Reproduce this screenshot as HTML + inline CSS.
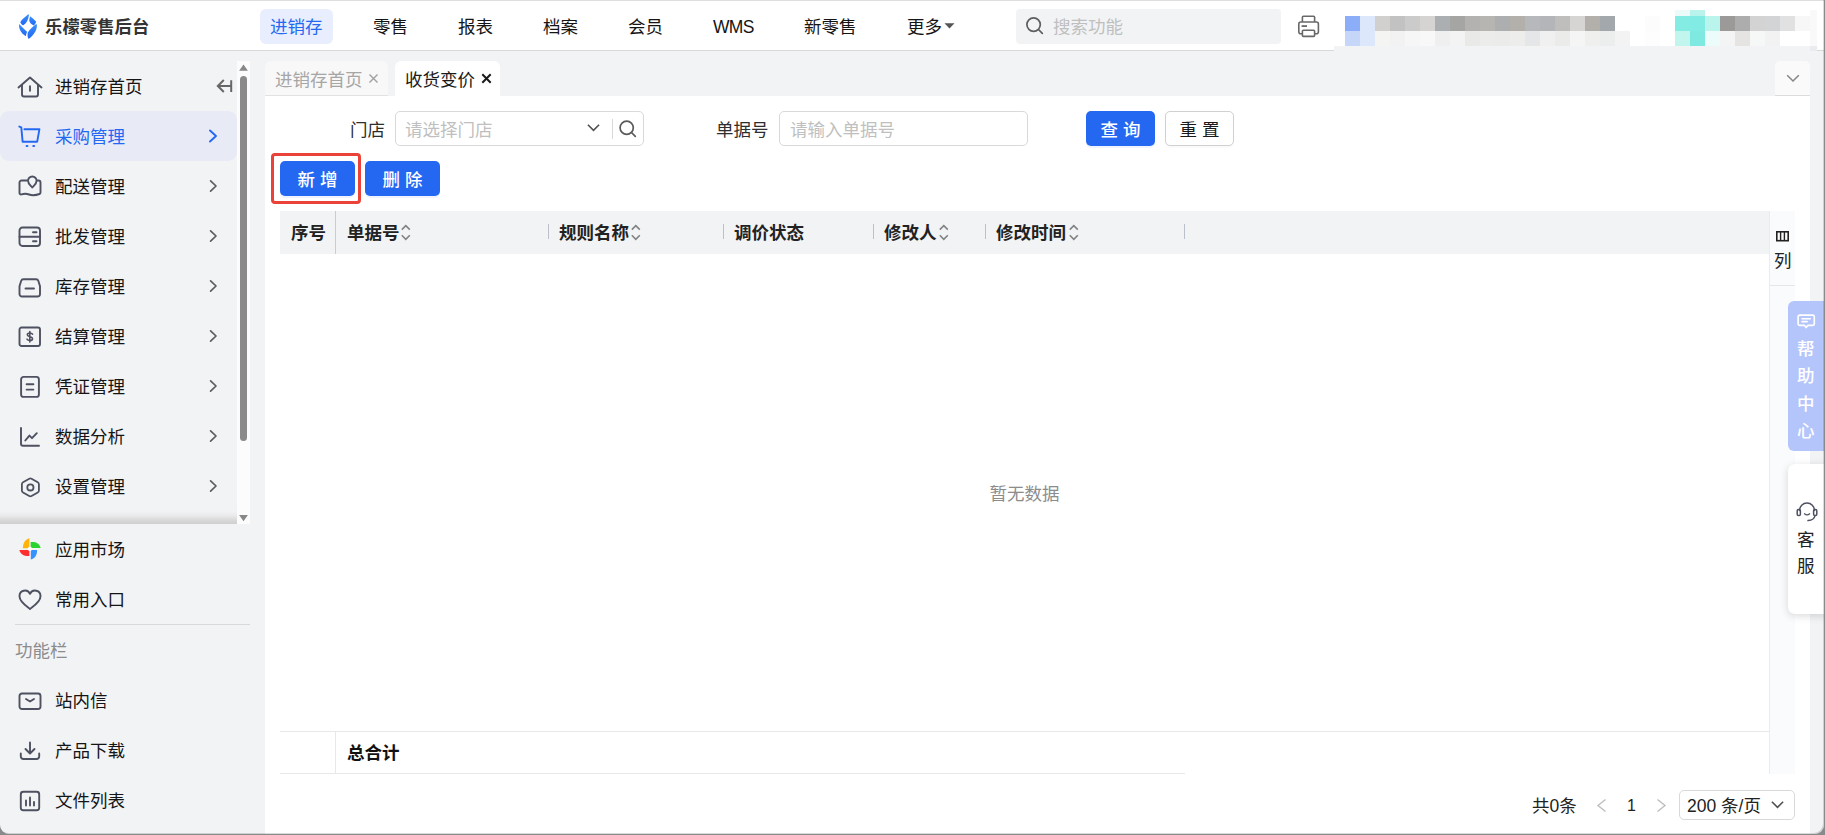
<!DOCTYPE html>
<html lang="zh-CN">
<head>
<meta charset="utf-8">
<title>乐檬零售后台</title>
<style>
*{box-sizing:border-box;margin:0;padding:0}
html,body{width:1825px;height:835px;overflow:hidden}
#win{position:absolute;left:0;top:0;width:1824px;height:834px;background:#f2f3f5;border-radius:0 0 9px 9px;overflow:hidden}
body{position:relative;background:#8a8a8a;font-family:"Liberation Sans","Noto Sans CJK SC",sans-serif;font-size:17.5px;color:#151515;}
.abs{position:absolute}
.t{position:absolute;white-space:nowrap;line-height:24px;height:24px;margin-top:1px}
svg{position:absolute;overflow:visible}
/* header */
#hdr{left:0;top:0;width:1825px;height:51px;background:#fff;border-top:1px solid #dedede;border-bottom:1px solid #d8d8d8}
.nav{top:14px}
/* sidebar */
.mi{left:55px}
.chev{left:208px;width:10px;height:14px}
.ico{fill:none;stroke:#4d5160;stroke-width:1.9;stroke-linecap:round;stroke-linejoin:round}
/* table */
.th{font-weight:bold;color:#222}
.sep{position:absolute;top:224px;width:1px;height:15px;background:#bcc0cb}
.btn{position:absolute;height:35px;line-height:39px;font-weight:500;border-radius:5px;text-align:center;font-size:17.5px}
.blue{background:#2468f2;color:#fff}
#mosaic i{position:absolute;display:block}
</style>
</head>
<body>
<div id="win">
<!-- ===== HEADER ===== -->
<div id="hdr" class="abs"></div>
<svg style="left:10px;top:5px" width="40" height="40" viewBox="0 0 40 40">
  <defs><linearGradient id="lg" x1="0" y1="0" x2="0" y2="1"><stop offset="0" stop-color="#3d8ff9"/><stop offset="1" stop-color="#1e68f4"/></linearGradient></defs>
  <path fill="url(#lg)" d="M18.300 9.200C14.500 12.500 11.500 14.500 10.300 17.200C11 18.800 12 19.800 13.200 20.300C16 18.500 18.500 15 18.900 10.200C18.900 9.500 18.700 9.200 18.300 9.200Z"/>
  <path fill="url(#lg)" d="M20.200 11.200C22 13 24.500 14.500 26.200 16.800C25.700 18.300 24.900 19.500 23.800 20.500C21.500 19.500 19.600 17.800 19.200 15.600C19.300 14 19.700 12.500 20.200 11.200Z"/>
  <path fill="url(#lg)" d="M9.300 19.100C8.300 22.500 10.500 28 15.700 31.300C16 29.800 16.500 28.200 17.100 26.800C14.500 24.500 11.500 22 9.300 19.100Z"/>
  <path fill="url(#lg)" d="M26.600 18.800C27.800 23 25 29.500 18.600 34C17.500 32.500 17.300 30 17.800 27.600C19.500 24.500 23 21.500 26.600 18.800Z"/>
</svg>
<div class="t" style="left:45px;top:14px;font-weight:bold;font-size:17.3px;color:#333;letter-spacing:0.100px">乐檬零售后台</div>

<div class="abs" style="left:260px;top:9px;width:73px;height:35px;border-radius:6px;background:#e8eefe"></div>
<div class="t nav" style="left:270px;color:#2468f2">进销存</div>
<div class="t nav" style="left:373px">零售</div>
<div class="t nav" style="left:458px">报表</div>
<div class="t nav" style="left:543px">档案</div>
<div class="t nav" style="left:628px">会员</div>
<div class="t nav" style="left:713px;letter-spacing:-0.700px">WMS</div>
<div class="t nav" style="left:804px">新零售</div>
<div class="t nav" style="left:907px">更多</div>
<svg style="left:944px;top:23px" width="11" height="6" viewBox="0 0 11 6"><path d="M0.5 0.3H10.5L5.500 5.600Z" fill="#555"/></svg>

<div class="abs" style="left:1016px;top:9px;width:265px;height:35px;border-radius:4px;background:#f2f3f5"></div>
<svg style="left:1025px;top:16px" width="19" height="19" viewBox="0 0 19 19"><circle cx="8.6" cy="8.6" r="6.700" fill="none" stroke="#5e5e5e" stroke-width="1.7"/><path d="M13.500 13.500L17.300 17.300" stroke="#5e5e5e" stroke-width="1.7" stroke-linecap="round"/></svg>
<div class="t" style="left:1053px;top:14px;color:#bfbfbf">搜索功能</div>

<!-- printer -->
<svg style="left:1297px;top:14px" width="24" height="24" viewBox="0 0 24 24" fill="none" stroke="#686868" stroke-width="1.600" stroke-linejoin="round" stroke-linecap="butt">
  <path d="M5.400 8V3.300a1 1 0 0 1 1-1h10.200a1 1 0 0 1 1 1V8"/>
  <rect x="1.800" y="8" width="19.600" height="11.700" rx="2"/>
  <rect x="5.400" y="16.200" width="12.200" height="6.200" rx="1" fill="#fff"/>
  <path d="M4.600 12.100h5.400" stroke-width="1.800"/>
</svg>

<!-- mosaic -->
<div id="mosaic"><i style="left:1345px;top:16px;width:15px;height:15px;background:#8caef8"></i><i style="left:1360px;top:16px;width:15px;height:15px;background:#dde7fb"></i><i style="left:1375px;top:16px;width:15px;height:15px;background:#d1d0ce"></i><i style="left:1390px;top:16px;width:15px;height:15px;background:#c2c2c2"></i><i style="left:1405px;top:16px;width:15px;height:15px;background:#cbcbcb"></i><i style="left:1420px;top:16px;width:15px;height:15px;background:#d5d4d2"></i><i style="left:1435px;top:16px;width:15px;height:15px;background:#abafb2"></i><i style="left:1450px;top:16px;width:15px;height:15px;background:#a5a5a3"></i><i style="left:1465px;top:16px;width:15px;height:15px;background:#b3b2b0"></i><i style="left:1480px;top:16px;width:15px;height:15px;background:#b7b5b2"></i><i style="left:1495px;top:16px;width:15px;height:15px;background:#adaeb0"></i><i style="left:1510px;top:16px;width:15px;height:15px;background:#b3afaa"></i><i style="left:1525px;top:16px;width:15px;height:15px;background:#b6b8bb"></i><i style="left:1540px;top:16px;width:15px;height:15px;background:#b3b5b8"></i><i style="left:1555px;top:16px;width:15px;height:15px;background:#bfbebd"></i><i style="left:1570px;top:16px;width:15px;height:15px;background:#d6d5d3"></i><i style="left:1585px;top:16px;width:15px;height:15px;background:#b3b0ac"></i><i style="left:1600px;top:16px;width:15px;height:15px;background:#a3a8ad"></i><i style="left:1345px;top:31px;width:15px;height:15px;background:#c5d6f8"></i><i style="left:1360px;top:31px;width:15px;height:15px;background:#dde7fb"></i><i style="left:1375px;top:31px;width:15px;height:15px;background:#f4f4f2"></i><i style="left:1390px;top:31px;width:15px;height:15px;background:#f1f2f1"></i><i style="left:1405px;top:31px;width:15px;height:15px;background:#f6f6f6"></i><i style="left:1420px;top:31px;width:15px;height:15px;background:#f8f8f8"></i><i style="left:1435px;top:31px;width:15px;height:15px;background:#efefef"></i><i style="left:1450px;top:31px;width:15px;height:15px;background:#f3f3f3"></i><i style="left:1465px;top:31px;width:15px;height:15px;background:#e9e9e8"></i><i style="left:1480px;top:31px;width:15px;height:15px;background:#ececeb"></i><i style="left:1495px;top:31px;width:15px;height:15px;background:#ebebea"></i><i style="left:1510px;top:31px;width:15px;height:15px;background:#ededec"></i><i style="left:1525px;top:31px;width:15px;height:15px;background:#e4e6e8"></i><i style="left:1540px;top:31px;width:15px;height:15px;background:#eff0ef"></i><i style="left:1555px;top:31px;width:15px;height:15px;background:#ebebe9"></i><i style="left:1570px;top:31px;width:15px;height:15px;background:#f5f5f5"></i><i style="left:1585px;top:31px;width:15px;height:15px;background:#efefee"></i><i style="left:1600px;top:31px;width:15px;height:15px;background:#eceeed"></i><i style="left:1615px;top:31px;width:15px;height:15px;background:#f3f3f3"></i><i style="left:1675px;top:10px;width:15px;height:6px;background:#ecfbfa"></i><i style="left:1690px;top:10px;width:15px;height:6px;background:#b9f3ec"></i><i style="left:1645px;top:16px;width:15px;height:15px;background:#fcfcfc"></i><i style="left:1675px;top:16px;width:15px;height:15px;background:#85ece4"></i><i style="left:1690px;top:16px;width:15px;height:15px;background:#82ebe3"></i><i style="left:1705px;top:16px;width:15px;height:15px;background:#b9f4ed"></i><i style="left:1720px;top:16px;width:15px;height:15px;background:#9c9a98"></i><i style="left:1735px;top:16px;width:15px;height:15px;background:#adadad"></i><i style="left:1750px;top:16px;width:15px;height:15px;background:#d3d3d3"></i><i style="left:1765px;top:16px;width:15px;height:15px;background:#d3d4d6"></i><i style="left:1780px;top:16px;width:15px;height:15px;background:#e1e1e1"></i><i style="left:1795px;top:16px;width:15px;height:15px;background:#f7f7f7"></i><i style="left:1645px;top:31px;width:15px;height:15px;background:#fdfdfd"></i><i style="left:1675px;top:31px;width:15px;height:15px;background:#c3f5ef"></i><i style="left:1690px;top:31px;width:15px;height:15px;background:#7de9e1"></i><i style="left:1705px;top:31px;width:15px;height:15px;background:#ecfcfb"></i><i style="left:1720px;top:31px;width:15px;height:15px;background:#f4f4f4"></i><i style="left:1735px;top:31px;width:15px;height:15px;background:#e5e4e2"></i><i style="left:1750px;top:31px;width:15px;height:15px;background:#f6f7f7"></i><i style="left:1765px;top:31px;width:15px;height:15px;background:#f2f2f2"></i><i style="left:1810px;top:10px;width:7px;height:36px;background:#f9f9f9"></i><i style="left:1334px;top:46px;width:483px;height:5px;background:#f2f3f5"></i><i style="left:1810px;top:46px;width:7px;height:5px;background:#e9ebef"></i></div>

<!-- ===== SIDEBAR ===== -->
<div class="abs" style="left:0;top:111px;width:237px;height:50px;border-radius:9px;background:#e8ebf6"></div>
<!-- scrollbar -->
<div class="abs" style="left:237px;top:61px;width:13px;height:463px;background:#fcfcfc"></div>
<svg style="left:239px;top:64px" width="9" height="7" viewBox="0 0 9 7"><path d="M4.500 0.500L8.900 6.800H0.100Z" fill="#888"/></svg>
<svg style="left:239px;top:515px" width="9" height="7" viewBox="0 0 9 7"><path d="M4.500 6.300L8.900 0.100H0.100Z" fill="#888"/></svg>
<div class="abs" style="left:240px;top:76px;width:7px;height:365px;border-radius:4px;background:#8a8a8a"></div>
<!-- bottom shadow of scroll area -->
<div class="abs" style="left:0;top:511px;width:237px;height:13px;background:linear-gradient(#f2f3f5,#eaeaeb 35%,#d9d9da 70%,#cecece)"></div>

<div class="t mi" style="top:74px">进销存首页</div>
<div class="t mi" style="top:124px;color:#2468f2">采购管理</div>
<div class="t mi" style="top:174px">配送管理</div>
<div class="t mi" style="top:224px">批发管理</div>
<div class="t mi" style="top:274px">库存管理</div>
<div class="t mi" style="top:324px">结算管理</div>
<div class="t mi" style="top:374px">凭证管理</div>
<div class="t mi" style="top:424px">数据分析</div>
<div class="t mi" style="top:474px">设置管理</div>
<div class="t mi" style="top:537px">应用市场</div>
<div class="t mi" style="top:587px">常用入口</div>
<div class="abs" style="left:15px;top:624px;width:235px;height:1px;background:#d9d9d9"></div>
<div class="t" style="left:15px;top:638px;color:#8c8c8c">功能栏</div>
<div class="t mi" style="top:688px">站内信</div>
<div class="t mi" style="top:738px">产品下载</div>
<div class="t mi" style="top:788px">文件列表</div>

<!-- collapse icon -->
<svg style="left:216px;top:78px" width="17" height="16" viewBox="0 0 17 16" fill="none" stroke="#676767" stroke-width="2" stroke-linecap="butt" stroke-linejoin="miter"><path d="M1.800 8H15M7.800 2L1.800 8L7.800 14M15.200 2.200V14"/></svg>

<!-- chevrons -->
<svg class="chev" style="top:129px" viewBox="0 0 10 14"><path d="M2 1.500L8 7L2 12.500" fill="none" stroke="#2468f2" stroke-width="1.900" stroke-linecap="round" stroke-linejoin="round"/></svg>
<svg class="chev" style="top:179px" viewBox="0 0 10 14"><path d="M2.600 1.800L8 7L2.600 12.200" fill="none" stroke="#5c5c5c" stroke-width="1.700" stroke-linecap="round" stroke-linejoin="round"/></svg>
<svg class="chev" style="top:229px" viewBox="0 0 10 14"><path d="M2.600 1.800L8 7L2.600 12.200" fill="none" stroke="#5c5c5c" stroke-width="1.700" stroke-linecap="round" stroke-linejoin="round"/></svg>
<svg class="chev" style="top:279px" viewBox="0 0 10 14"><path d="M2.600 1.800L8 7L2.600 12.200" fill="none" stroke="#5c5c5c" stroke-width="1.700" stroke-linecap="round" stroke-linejoin="round"/></svg>
<svg class="chev" style="top:329px" viewBox="0 0 10 14"><path d="M2.600 1.800L8 7L2.600 12.200" fill="none" stroke="#5c5c5c" stroke-width="1.700" stroke-linecap="round" stroke-linejoin="round"/></svg>
<svg class="chev" style="top:379px" viewBox="0 0 10 14"><path d="M2.600 1.800L8 7L2.600 12.200" fill="none" stroke="#5c5c5c" stroke-width="1.700" stroke-linecap="round" stroke-linejoin="round"/></svg>
<svg class="chev" style="top:429px" viewBox="0 0 10 14"><path d="M2.600 1.800L8 7L2.600 12.200" fill="none" stroke="#5c5c5c" stroke-width="1.700" stroke-linecap="round" stroke-linejoin="round"/></svg>
<svg class="chev" style="top:479px" viewBox="0 0 10 14"><path d="M2.600 1.800L8 7L2.600 12.200" fill="none" stroke="#5c5c5c" stroke-width="1.700" stroke-linecap="round" stroke-linejoin="round"/></svg>

<!-- ICONS -->
<!-- home -->
<svg class="ico" style="left:17px;top:76px" width="26" height="22" viewBox="0 0 26 22"><path d="M1.500 11.500L13 1.500L24.500 11.500"/><path d="M5 9V18.500a2 2 0 0 0 2 2H19a2 2 0 0 0 2-2V9"/><path d="M13 10.300V14.800"/></svg>
<!-- cart -->
<svg class="ico" style="left:18px;top:125px;stroke:#2468f2" width="23" height="23" viewBox="0 0 23 23"><path d="M1.300 1.600L3.300 2.300L4.600 16.700H19.200L21.400 4.300H6.400"/><path d="M8.600 21h.8M15.300 21h.8" stroke-width="2"/></svg>
<!-- map -->
<svg class="ico" style="left:18px;top:175px" width="24" height="22" viewBox="0 0 24 22"><path d="M9 5.500H3.500a2 2 0 0 0-2 2V18a1.500 1.500 0 0 0 2 1.400C6 18.600 8.500 18.600 11 19.500S17 20.600 21.500 19a1.500 1.500 0 0 0 1-1.400V7.500a2 2 0 0 0-2-2H19.500"/><path d="M14.300 1.500a4.300 4.300 0 0 1 4.300 4.300C18.600 8.800 16 10.500 14.300 12.500C12.600 10.500 10 8.800 10 5.800A4.300 4.300 0 0 1 14.300 1.500Z"/></svg>
<!-- wholesale -->
<svg class="ico" style="left:18px;top:226px" width="24" height="22" viewBox="0 0 24 22"><rect x="1.500" y="1.500" width="20.500" height="18.500" rx="3"/><path d="M1.500 10.800H22M15 6.300h3.500M15 15.300h3.500"/></svg>
<!-- stock -->
<svg class="ico" style="left:18px;top:277px" width="24" height="21" viewBox="0 0 24 21"><path d="M5.500 2.200H18a2.500 2.500 0 0 1 2.400 1.800L22 9.300V17a2.500 2.500 0 0 1-2.500 2.500H4A2.500 2.500 0 0 1 1.500 17V9.300L3.100 4A2.500 2.500 0 0 1 5.500 2.200Z"/><path d="M7.500 11.500h8.500"/></svg>
<!-- settle -->
<svg class="ico" style="left:18px;top:326px" width="24" height="22" viewBox="0 0 24 22"><rect x="1.500" y="1.500" width="20.500" height="18.500" rx="2"/><path d="M14.500 8.200C14 7.300 13 7 11.800 7C10.300 7 9.300 7.700 9.300 8.800C9.300 11.300 14.500 10 14.500 12.700C14.500 13.800 13.400 14.500 11.800 14.500C10.500 14.500 9.500 14 9 13.200M11.800 5.500V16" stroke-width="1.600"/></svg>
<!-- voucher -->
<svg class="ico" style="left:19px;top:375px" width="22" height="24" viewBox="0 0 22 24"><rect x="2.100" y="1.900" width="17.800" height="20" rx="2.500"/><path d="M7.600 9.200h6.800M7.600 14.600h6.800"/></svg>
<!-- data -->
<svg class="ico" style="left:19px;top:426px" width="22" height="22" viewBox="0 0 22 22"><path d="M2 2V17.800a2 2 0 0 0 2 2H20"/><path d="M6.300 14.500L10.400 9.600L13 12.200L17.800 7.200"/></svg>
<!-- settings -->
<svg class="ico" style="left:19.600px;top:476.500px" width="20.800" height="20.800" viewBox="0 0 22 22" stroke-width="2"><path d="M9.800 1.800a2.400 2.400 0 0 1 2.400 0L18.800 5.600a2.400 2.400 0 0 1 1.200 2.100V14.300a2.400 2.400 0 0 1-1.200 2.100L12.200 20.200a2.400 2.400 0 0 1-2.400 0L3.200 16.400a2.400 2.400 0 0 1-1.200-2.100V7.700A2.400 2.400 0 0 1 3.200 5.600Z"/><circle cx="11" cy="11" r="3.300"/></svg>
<!-- pinwheel -->
<svg style="left:19px;top:538px" width="22" height="22" viewBox="0 0 22 22">
  <path d="M10.400 0.200V10.200H3.900C3.900 5 6 1.500 10.400 0.200Z" fill="#ffb30b"/>
  <path d="M11.600 4H15C18.500 4.300 20.800 7 21.700 10H11.600Z" fill="#28d42e"/>
  <path d="M11.800 21.600V11.900H18.100C18.100 17 16 20.300 11.800 21.600Z" fill="#3592ff"/>
  <path d="M0.300 11.900H10.400V17.900H7C3.500 17.600 1.200 15 0.300 11.900Z" fill="#ff2f2f"/>
  <circle cx="10.900" cy="10.900" r="2.100" fill="#fff"/>
</svg>
<!-- heart -->
<svg class="ico" style="left:18px;top:589px" width="24" height="22" viewBox="0 0 24 22"><path d="M12 20C9 17.500 1.500 13 1.500 7.300A5.500 5.500 0 0 1 12 4.800A5.500 5.500 0 0 1 22.500 7.300C22.500 13 15 17.500 12 20Z"/></svg>
<!-- mail -->
<svg class="ico" style="left:18px;top:692px" width="24" height="19" viewBox="0 0 24 19"><rect x="1.500" y="1.500" width="21" height="15.500" rx="2.500"/><path d="M8 7L12 9.500L16 7"/></svg>
<!-- download -->
<svg class="ico" style="left:19px;top:741px" width="22" height="20" viewBox="0 0 22 20"><path d="M11 1.500V12M6.500 8L11 12.500L15.500 8"/><path d="M1.800 12.500V15.500a2.500 2.500 0 0 0 2.500 2.500H17.700a2.500 2.500 0 0 0 2.500-2.500V12.500"/></svg>
<!-- file list -->
<svg class="ico" style="left:19px;top:790px" width="22" height="22" viewBox="0 0 22 22"><rect x="1.800" y="1.800" width="18.400" height="18.400" rx="2.500"/><path d="M7 10.500V15.500M11 7.500V15.500M15 12V15.500"/></svg>

<!-- ===== MAIN ===== -->
<!-- tabs -->
<div class="abs" style="left:265px;top:61px;width:123px;height:35px;background:#f8f8f8;border-radius:6px 6px 0 0;border-bottom:1px solid #e2e2e2"></div>
<div class="abs" style="left:395px;top:61px;width:105px;height:36px;background:#fff;border-radius:6px 6px 0 0"></div>
<div class="t" style="left:275px;top:67px;color:#a6a6a6">进销存首页</div>
<svg style="left:368px;top:73px" width="11" height="11" viewBox="0 0 11 11"><path d="M1.500 1.500L9.500 9.500M9.500 1.500L1.500 9.500" stroke="#a0a0a0" stroke-width="1.400"/></svg>
<div class="t" style="left:405px;top:67px;color:#1a1a1a">收货变价</div>
<svg style="left:481px;top:73px" width="11" height="11" viewBox="0 0 11 11"><path d="M1.300 1.300L9.700 9.700M9.700 1.300L1.300 9.700" stroke="#1a1a1a" stroke-width="2"/></svg>
<!-- tab dropdown button -->
<div class="abs" style="left:1775px;top:61px;width:35px;height:35px;background:#fafafa;border-radius:5px 5px 0 0;border-bottom:1px solid #dcdcdc"></div>
<svg style="left:1786px;top:74px" width="14" height="9" viewBox="0 0 14 9"><path d="M1.200 1.200L7 7L12.800 1.200" fill="none" stroke="#868686" stroke-width="1.500"/></svg>

<!-- panel -->
<div class="abs" style="left:265px;top:96px;width:1545px;height:739px;background:#fff"></div>

<!-- filter row -->
<div class="t" style="left:350px;top:117px;color:#2e2e2e">门店</div>
<div class="abs" style="left:395px;top:111px;width:249px;height:35px;border:1px solid #d9d9d9;border-radius:5px;background:#fff"></div>
<div class="t" style="left:405px;top:117px;color:#bfbfbf">请选择门店</div>
<svg style="left:586px;top:123px" width="15" height="10" viewBox="0 0 15 10"><path d="M1.900 1.700L7.500 7.300L13.100 1.700" fill="none" stroke="#505050" stroke-width="1.600"/></svg>
<div class="abs" style="left:612px;top:119px;width:1px;height:20px;background:#d9d9d9"></div>
<svg style="left:618px;top:119px" width="20" height="20" viewBox="0 0 20 20"><circle cx="8.700" cy="8.700" r="6.600" fill="none" stroke="#5a5a5a" stroke-width="1.700"/><path d="M13.500 13.500L17.300 17.300" stroke="#5a5a5a" stroke-width="1.700" stroke-linecap="round"/></svg>

<div class="t" style="left:716px;top:117px;color:#2e2e2e">单据号</div>
<div class="abs" style="left:779px;top:111px;width:249px;height:35px;border:1px solid #d9d9d9;border-radius:5px;background:#fff"></div>
<div class="t" style="left:790px;top:117px;color:#bfbfbf">请输入单据号</div>

<div class="btn blue" style="left:1086px;top:111px;width:69px;box-shadow:0 2px 0 rgba(36,104,242,.08)">查 询</div>
<div class="btn" style="left:1165px;top:111px;width:69px;background:#fff;border:1px solid #d0d0d0;line-height:37px;font-weight:400;color:#1a1a1a;box-shadow:0 2px 0 rgba(0,0,0,.02)">重 置</div>

<!-- action buttons -->
<div class="abs" style="left:271px;top:153px;width:90px;height:51px;border:3px solid #ea4238;border-radius:4px"></div>
<div class="btn blue" style="left:280px;top:161px;width:75px;box-shadow:0 2px 0 rgba(36,104,242,.08)">新 增</div>
<div class="btn blue" style="left:365px;top:161px;width:75px;box-shadow:0 2px 0 rgba(36,104,242,.08)">删 除</div>

<!-- table header -->
<div class="abs" style="left:280px;top:211px;width:1489px;height:43px;background:#f2f3f5"></div>
<div class="abs" style="left:335px;top:211px;width:1px;height:43px;background:#cbccd3"></div>
<div class="t th" style="left:291px;top:220px">序号</div>
<div class="t th" style="left:347px;top:220px">单据号</div>
<div class="t th" style="left:559px;top:220px">规则名称</div>
<div class="t th" style="left:734px;top:220px">调价状态</div>
<div class="t th" style="left:884px;top:220px">修改人</div>
<div class="t th" style="left:996px;top:220px">修改时间</div>
<div class="sep" style="left:548px"></div>
<div class="sep" style="left:723px"></div>
<div class="sep" style="left:873px"></div>
<div class="sep" style="left:985px"></div>
<div class="sep" style="left:1184px"></div>
<!-- sorters -->
<svg class="sorter" style="left:400px;top:224px" width="11" height="18" viewBox="0 0 11 18"><path d="M1.800 5.600L5.800 1.600L9.800 5.600M1.800 11.300L5.800 15.300L9.800 11.300" fill="none" stroke="#828282" stroke-width="1.600"/></svg>
<svg class="sorter" style="left:630px;top:224px" width="11" height="18" viewBox="0 0 11 18"><path d="M1.800 5.600L5.800 1.600L9.800 5.600M1.800 11.300L5.800 15.300L9.800 11.300" fill="none" stroke="#828282" stroke-width="1.600"/></svg>
<svg class="sorter" style="left:938px;top:224px" width="11" height="18" viewBox="0 0 11 18"><path d="M1.800 5.600L5.800 1.600L9.800 5.600M1.800 11.300L5.800 15.300L9.800 11.300" fill="none" stroke="#828282" stroke-width="1.600"/></svg>
<svg class="sorter" style="left:1068px;top:224px" width="11" height="18" viewBox="0 0 11 18"><path d="M1.800 5.600L5.800 1.600L9.800 5.600M1.800 11.300L5.800 15.300L9.800 11.300" fill="none" stroke="#828282" stroke-width="1.600"/></svg>

<!-- column tool -->
<div class="abs" style="left:1769px;top:211px;width:26px;height:563px;background:#fafbfc;border-left:1px solid #ececec"></div>
<div class="abs" style="left:1770px;top:285px;width:25px;height:1px;background:#e6e6e6"></div>
<svg style="left:1776px;top:231px" width="13" height="11" viewBox="0 0 13 11"><rect x="0.800" y="0.800" width="11.400" height="8.900" fill="none" stroke="#222" stroke-width="1.600"/><path d="M4.600 1V9.500M8.400 1V9.500" stroke="#222" stroke-width="1.400"/></svg>
<div class="t" style="left:1774px;top:247.500px;color:#222">列</div>

<!-- empty -->
<div class="t" style="left:989.500px;top:481px;color:#8c8c8c">暂无数据</div>

<!-- footer row -->
<div class="abs" style="left:280px;top:731px;width:1489px;height:1px;background:#e8e8e8"></div>
<div class="abs" style="left:280px;top:773px;width:905px;height:1px;background:#e8e8e8"></div>
<div class="abs" style="left:335px;top:731px;width:1px;height:42px;background:#e8e8e8"></div>
<div class="t th" style="left:347px;top:740px;color:#111">总合计</div>

<!-- pagination -->
<div class="t" style="left:1532px;top:793px;color:#222">共0条</div>
<svg style="left:1596px;top:798px" width="11" height="15" viewBox="0 0 11 15"><path d="M9.500 1.500L2 7.500L9.500 13.500" fill="none" stroke="#bdbdbd" stroke-width="1.400"/></svg>
<div class="t" style="left:1627px;top:793px;color:#222;font-size:16px">1</div>
<svg style="left:1656px;top:798px" width="11" height="15" viewBox="0 0 11 15"><path d="M1.500 1.500L9 7.500L1.500 13.500" fill="none" stroke="#bdbdbd" stroke-width="1.400"/></svg>
<div class="abs" style="left:1679px;top:790px;width:116px;height:30px;border:1px solid #d9d9d9;border-radius:5px;background:#fff"></div>
<div class="t" style="left:1687px;top:793px;color:#222">200 条/页</div>
<svg style="left:1770px;top:800px" width="15" height="10" viewBox="0 0 15 10"><path d="M1.900 1.700L7.500 7.300L13.100 1.700" fill="none" stroke="#505050" stroke-width="1.600"/></svg>

<!-- help center -->
<div class="abs" style="left:1788px;top:301px;width:40px;height:150px;border-radius:6px 0 0 6px;background:#b4c5fc"></div>
<svg style="left:1797.200px;top:313.700px" width="18.400" height="15.640" viewBox="0 0 20 17" fill="none" stroke="#fff" stroke-width="1.800" stroke-linejoin="round" stroke-linecap="round"><path d="M3 1.200H17a1.800 1.800 0 0 1 1.800 1.800V10.500a1.800 1.800 0 0 1-1.800 1.800H12L10 14.800L8 12.300H3A1.800 1.800 0 0 1 1.200 10.500V3A1.800 1.800 0 0 1 3 1.200Z"/><path d="M5.500 5.200h9M5.500 8.300h5.500"/></svg>
<div class="t" style="left:1797px;top:335.5px;color:#fff;font-weight:500">帮</div>
<div class="t" style="left:1797px;top:362.5px;color:#fff;font-weight:500">助</div>
<div class="t" style="left:1797px;top:390.5px;color:#fff;font-weight:500">中</div>
<div class="t" style="left:1797px;top:417.5px;color:#fff;font-weight:500">心</div>

<!-- service -->
<div class="abs" style="left:1788px;top:464px;width:40px;height:150px;border-radius:7px 0 0 7px;background:#fff;box-shadow:0 2px 8px rgba(0,0,0,.15)"></div>
<svg style="left:1796px;top:501px" width="22" height="21" viewBox="0 0 22 21" fill="none" stroke="#4d5160" stroke-width="1.500" stroke-linecap="round" stroke-linejoin="round"><path d="M3.500 9.500A7.500 7.500 0 0 1 18.500 9.500"/><rect x="1.200" y="8.500" width="3.200" height="6" rx="1.300"/><rect x="17.600" y="8.500" width="3.200" height="6" rx="1.300"/><path d="M19 14.500C18.500 17.500 16 19.300 12 19.600"/><path d="M8.500 12.800C10 14 12.200 14 13.600 12.800" stroke-width="1.300"/></svg>
<div class="t" style="left:1797px;top:527px;color:#222">客</div>
<div class="t" style="left:1797px;top:553px;color:#222">服</div>

<div class="abs" style="left:0;top:0;width:1824px;height:834px;border-radius:0 0 9px 9px;box-shadow:inset -1px -1px 0 rgba(0,0,0,.14);pointer-events:none"></div>
</div>
</body>
</html>
